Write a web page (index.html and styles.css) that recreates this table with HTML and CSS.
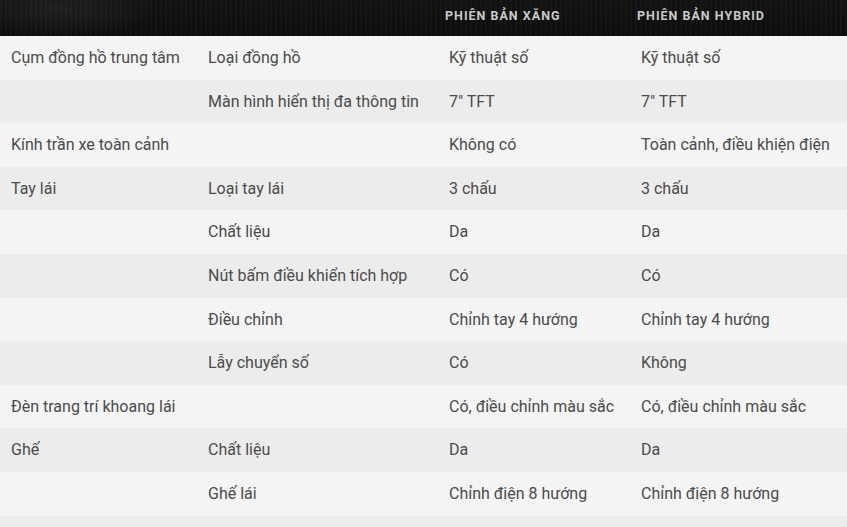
FILE: index.html
```html
<!DOCTYPE html>
<html lang="vi">
<head>
<meta charset="utf-8">
<title>Thông số</title>
<link rel="stylesheet" href="styles.css">
</head>
<body>
<div class="spec">
  <div class="head">
    <div class="hcell"></div>
    <div class="hcell"></div>
    <div class="hcell">PHIÊN BẢN XĂNG</div>
    <div class="hcell">PHIÊN BẢN HYBRID</div>
  </div>
  <div class="row"><div class="c">Cụm đồng hồ trung tâm</div><div class="c">Loại đồng hồ</div><div class="c">Kỹ thuật số</div><div class="c">Kỹ thuật số</div></div>
  <div class="row"><div class="c"></div><div class="c">Màn hình hiển thị đa thông tin</div><div class="c">7" TFT</div><div class="c">7" TFT</div></div>
  <div class="row"><div class="c">Kính trần xe toàn cảnh</div><div class="c"></div><div class="c">Không có</div><div class="c">Toàn cảnh, điều khiện điện</div></div>
  <div class="row"><div class="c">Tay lái</div><div class="c">Loại tay lái</div><div class="c">3 chấu</div><div class="c">3 chấu</div></div>
  <div class="row"><div class="c"></div><div class="c">Chất liệu</div><div class="c">Da</div><div class="c">Da</div></div>
  <div class="row"><div class="c"></div><div class="c">Nút bấm điều khiển tích hợp</div><div class="c">Có</div><div class="c">Có</div></div>
  <div class="row"><div class="c"></div><div class="c">Điều chỉnh</div><div class="c">Chỉnh tay 4 hướng</div><div class="c">Chỉnh tay 4 hướng</div></div>
  <div class="row"><div class="c"></div><div class="c">Lẫy chuyển số</div><div class="c">Có</div><div class="c">Không</div></div>
  <div class="row"><div class="c">Đèn trang trí khoang lái</div><div class="c"></div><div class="c">Có, điều chỉnh màu sắc</div><div class="c">Có, điều chỉnh màu sắc</div></div>
  <div class="row"><div class="c">Ghế</div><div class="c">Chất liệu</div><div class="c">Da</div><div class="c">Da</div></div>
  <div class="row"><div class="c"></div><div class="c">Ghế lái</div><div class="c">Chỉnh điện 8 hướng</div><div class="c">Chỉnh điện 8 hướng</div></div>
  <div class="row"><div class="c"></div><div class="c"></div><div class="c"></div><div class="c"></div></div>
</div>
</body>
</html>
```
FILE: styles.css
```css
html, body {
  margin: 0;
  padding: 0;
  background: #f4f4f4;
  overflow: hidden;
}
body {
  font-family: Roboto, "Noto Sans", sans-serif;
  color: #4b4b4b;
}
.spec {
  width: 847px;
  height: 527px;
  overflow: hidden;
}
.head, .row {
  display: grid;
  grid-template-columns: 197px 241px 192px 1fr;
}
.head {
  height: 36px;
  background:
    radial-gradient(ellipse 140px 40px at 60px 10px, rgba(255,255,255,0.06), rgba(255,255,255,0) 70%),
    repeating-linear-gradient(90deg, rgba(255,255,255,0.025) 0 2px, rgba(0,0,0,0) 2px 5px),
    linear-gradient(180deg, #121212 0%, #0d0d0d 100%);
}
.hcell {
  padding: 0 0 0 7px;
  font-size: 12.5px;
  font-weight: 700;
  letter-spacing: 1px;
  color: #c9c9c9;
  line-height: 32px;
}
.row {
  height: 43.6px;
  font-size: 16px;
}
.row:nth-child(even) { background: #f4f4f4; }
.row:nth-child(odd) { background: #ececec; }
.c {
  padding-left: 11px;
  line-height: 44px;
  white-space: nowrap;
}
```
